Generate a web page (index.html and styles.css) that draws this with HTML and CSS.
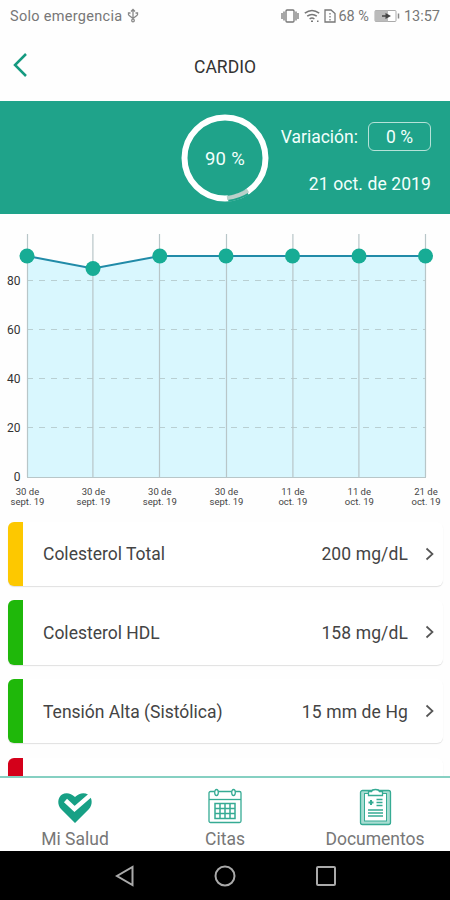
FILE: index.html
```html
<!DOCTYPE html>
<html lang="es">
<head>
    <meta charset="UTF-8">
    <title>Cardio</title>
    <link rel="stylesheet" href="styles.css">
</head>
<body>

<div class="status">
    <span class="carrier">Solo emergencia</span>
    <svg class="usb" width="12" height="16" viewBox="0 0 12 16" fill="none" stroke="#888" stroke-width="1.3">
        <path d="M6 2v9M4 3.500l2-2 2 2M1.500 7V5h2M10.500 7V5h-2M1.500 7L6 10.500 10.500 7"/>
        <circle cx="6" cy="12.500" r="1.300"/>
    </svg>
    <svg class="vibrate" width="18" height="16" viewBox="0 0 18 16" fill="none" stroke="#777" stroke-width="1.300">
        <rect x="5" y="2" width="8" height="12" rx="1"/>
        <path d="M3 3.500v9M1 5v6M15 3.500v9M17 5v6"/>
    </svg>
    <svg class="wifi" width="16" height="16" viewBox="0 0 16 16" fill="none" stroke="#777" stroke-width="1.500">
        <path d="M.8 5.200q7.200-5.400 14.400 0M3.200 8.200q4.800-3.600 9.600 0M5.600 11q2.400-1.800 4.800 0"/>
        <path d="M7 13.300h2M13 13.300h1.500"/>
    </svg>
    <svg class="sim" width="12" height="16" viewBox="0 0 12 16" fill="none" stroke="#777" stroke-width="1.300">
        <path d="M1 2h6l4 3.500V14H1zM6 5v1.500M6 8v1.500M6 11v1.500"/>
    </svg>
    <span class="percent">68 %</span>
    <svg class="battery" width="26" height="14" viewBox="0 0 26 14">
        <rect x="1" y="1.500" width="21" height="11" rx="1" fill="#fff" stroke="#aaa"/>
        <path d="M1 1.500h13v11H1z" fill="#bbb"/>
        <path d="M8 6.200h3.500V4L17 7l-5.500 3V7.800H8z" fill="#444"/>
        <path d="M24.500 4.500v5" stroke="#888" stroke-width="1.500"/>
    </svg>
    <span class="clock">13:57</span>
</div>

<div class="header">
    <svg class="back" width="16" height="26" viewBox="0 0 16 26" fill="none" stroke="#159a80" stroke-width="2.500">
        <path d="M14 2L3 13l11 11"/>
    </svg>
    <h1>CARDIO</h1>
</div>

<div class="banner">
    <div class="ring">
        <svg width="88" height="88" viewBox="0 0 88 88" fill="none">
            <circle cx="44" cy="44" r="40.500" stroke="#fff" stroke-width="6"/>
            <path d="M47 84.400Q58 83 66 78" stroke="#1fa38a" stroke-width="6.500"/>
            <path d="M46 84Q58 82.500 67 76.500" stroke="#b9d0ca" stroke-width="4"/>
        </svg>
        <span>90 %</span>
    </div>
    <div class="summary">
        <div class="variation">Variación: <span class="pill">0 %</span></div>
        <div class="date">21 oct. de 2019</div>
    </div>
</div>

<svg class="chart" width="450" height="307" viewBox="0 214 450 307">
    <path class="area" d="M27 256L93 268.500L160 256H425.500V477H27z"/>
    <path class="guides" d="M27 280.500H425M27 329.500H425M27 378.500H425M27 427.500H425"/>
    <path class="verticals" d="M27.500 234V477M92.900 234V477M159.500 234V477M226.500 234V477M292.900 234V477M358.900 234V477M425.500 234V477M27 477.500H426"/>
    <path class="line" d="M27 256L93 268.500L160 256H425.500"/>
    <g class="dots">
        <circle cx="27" cy="256" r="7.500"/>
        <circle cx="93" cy="268.500" r="7.500"/>
        <circle cx="159.800" cy="256" r="7.500"/>
        <circle cx="226" cy="256" r="7.500"/>
        <circle cx="292.500" cy="256" r="7.500"/>
        <circle cx="359" cy="256" r="7.500"/>
        <circle cx="425.500" cy="256" r="7.500"/>
    </g>
    <g class="y-labels">
        <text x="20.500" y="284.500">80</text>
        <text x="20.500" y="333.500">60</text>
        <text x="20.500" y="382.500">40</text>
        <text x="20.500" y="431.500">20</text>
        <text x="20.500" y="480.500">0</text>
    </g>
    <g class="x-labels">
        <text x="27.500" y="495">30 de</text><text x="27.500" y="504.500">sept. 19</text>
        <text x="93.500" y="495">30 de</text><text x="93.500" y="504.500">sept. 19</text>
        <text x="159.800" y="495">30 de</text><text x="159.800" y="504.500">sept. 19</text>
        <text x="226.500" y="495">30 de</text><text x="226.500" y="504.500">sept. 19</text>
        <text x="292.900" y="495">11 de</text><text x="292.900" y="504.500">oct. 19</text>
        <text x="359.300" y="495">11 de</text><text x="359.300" y="504.500">oct. 19</text>
        <text x="426" y="495">21 de</text><text x="426" y="504.500">oct. 19</text>
    </g>
</svg>

<div class="list">
    <div class="card yellow">
        <span class="name">Colesterol Total</span>
        <span class="value">200 mg/dL</span>
        <svg class="chevron" width="9" height="14" viewBox="0 0 9 14"><path d="M1.500 1.500L7.500 7l-6 5.500"/></svg>
    </div>
    <div class="card green">
        <span class="name">Colesterol HDL</span>
        <span class="value">158 mg/dL</span>
        <svg class="chevron" width="9" height="14" viewBox="0 0 9 14"><path d="M1.500 1.500L7.500 7l-6 5.500"/></svg>
    </div>
    <div class="card green">
        <span class="name">Tensión Alta (Sistólica)</span>
        <span class="value">15 mm de Hg</span>
        <svg class="chevron" width="9" height="14" viewBox="0 0 9 14"><path d="M1.500 1.500L7.500 7l-6 5.500"/></svg>
    </div>
    <div class="card red"></div>
</div>

<div class="tabs">
    <div class="tab">
        <svg width="38" height="38" viewBox="0 0 38 38">
            <path d="M19 35L5 21C1 16.500 1.500 9.500 6 6.500c4-2.500 9-1.500 13 2.500 4-4 9-5 13-2.500 4.500 3 5 10 1 14.500z" fill="#17a085"/>
            <path d="M9.500 12.500l9 8.500L37 5" fill="none" stroke="#fff" stroke-width="4.500"/>
        </svg>
        <span>Mi Salud</span>
    </div>
    <div class="tab">
        <svg width="38" height="38" viewBox="0 0 38 38" fill="none" stroke="#36ab94" stroke-width="1.300">
            <rect x="3" y="3.500" width="32" height="31" rx="1.500"/>
            <path d="M3 11.500h32"/>
            <ellipse cx="10.500" cy="4.500" rx="1.800" ry="3" fill="#fff"/>
            <ellipse cx="27.500" cy="4.500" rx="1.800" ry="3" fill="#fff"/>
            <path d="M9 15.500h20v15H9zM9 20.500h20M9 25.500h20M14 15.500v15M19 15.500v15M24 15.500v15" stroke-width="1.500"/>
        </svg>
        <span>Citas</span>
    </div>
    <div class="tab">
        <svg width="38" height="38" viewBox="0 0 38 38" fill="none" stroke="#36ab94" stroke-width="1.300">
            <rect x="4.500" y="2.500" width="30" height="34" rx="2" fill="#a9ddd2"/>
            <rect x="8.500" y="5.500" width="22" height="27.500" fill="#fff" stroke-width="1"/>
            <path d="M12.500 7.500V3.500h3q.5-2 4-2t4 2h3v4z" fill="#fff"/>
            <path d="M12.500 14.500h5M15 12v5" stroke-width="2"/>
            <path d="M20.500 11.500h6M20.500 14.500h6M20.500 17.500h6M12 22h15M12 25h15M12 28h15"/>
        </svg>
        <span>Documentos</span>
    </div>
</div>

<div class="navbar">
    <svg width="20" height="22" viewBox="0 0 20 22"><path d="M17.500 2v18L2 11z"/></svg>
    <svg width="22" height="22" viewBox="0 0 22 22"><circle cx="11" cy="11" r="9.500"/></svg>
    <svg width="22" height="22" viewBox="0 0 22 22"><rect x="2" y="2" width="18" height="18" rx="1"/></svg>
</div>

</body>
</html>
```
FILE: styles.css
```css
* {
    box-sizing: border-box;
}
body {
    margin: 0;
    width: 450px;
    height: 900px;
    overflow: hidden;
    display: flex;
    flex-direction: column;
    background: #fefefe;
    font-family: Roboto, "Liberation Sans", sans-serif;
    color: #444;
}
svg {
    display: block;
    flex-shrink: 0;
}
.status {
    height: 32px;
    padding: 0 10px;
    display: flex;
    align-items: center;
    font-size: 14.5px;
    color: #777;
    white-space: nowrap;
}
.carrier {
    letter-spacing: 0.3px;
}
.usb {
    margin-left: 4px;
}
.vibrate {
    margin-left: auto;
}
.wifi {
    margin-left: 5px;
}
.sim {
    margin: 0 2px 0 4px;
}
.battery {
    margin: 0 4px 0 5px;
}
.header {
    height: 69px;
    display: grid;
    grid-template-columns: 40px 1fr 40px;
    align-items: center;
}
.back {
    margin-left: 12px;
    margin-bottom: 3px;
}
h1 {
    margin: 0;
    text-align: center;
    font-size: 17.5px;
    font-weight: 400;
    color: #333;
}
.banner {
    height: 113px;
    display: grid;
    grid-template-columns: 1fr 88px 1fr;
    align-items: center;
    background: #1fa38a;
    color: #f2fffc;
    font-size: 17.5px;
}
.ring {
    grid-column: 2;
    display: grid;
    place-items: center;
    font-size: 18.5px;
    letter-spacing: 0.3px;
}
.ring svg, .ring span {
    grid-area: 1 / 1;
}
.ring span {
    padding-top: 2px;
}
.summary {
    display: flex;
    flex-direction: column;
    align-items: flex-end;
    gap: 22px;
    padding: 2px 19px 0 0;
}
.variation {
    display: flex;
    align-items: center;
    gap: 10px;
}
.pill {
    width: 63px;
    height: 29px;
    line-height: 28px;
    border: 1.5px solid #b5e2d8;
    border-radius: 6px;
    text-align: center;
}
.date {
    line-height: 22px;
    letter-spacing: 0.1px;
}
.chart {
    font-family: Roboto, "Liberation Sans", sans-serif;
}
.area {
    fill: #d9f7fe;
}
.guides {
    stroke: #b9cfd2;
    stroke-dasharray: 6 6;
}
.verticals {
    stroke: #b8c6c8;
    stroke-width: 1.2;
    fill: none;
}
.line {
    fill: none;
    stroke: #218ba8;
    stroke-width: 2;
}
.dots {
    fill: #17ac95;
}
.y-labels {
    font-size: 12px;
    fill: #333;
    text-anchor: end;
}
.x-labels {
    font-size: 9.5px;
    fill: #444;
    text-anchor: middle;
}
.list {
    flex: 1;
    min-height: 0;
    overflow: hidden;
    padding: 0.5px 7px 0 8px;
}
.card {
    height: 64.5px;
    margin-bottom: 14.2px;
    padding-right: 9px;
    display: flex;
    align-items: center;
    border-left: 15px solid;
    border-radius: 6px;
    background: #fff;
    box-shadow: 0 1px 1px #e0e0e0;
    font-size: 17.5px;
}
.yellow {
    border-left-color: #fdc800;
}
.green {
    border-left-color: #1fb80a;
}
.red {
    border-left-color: #d4001a;
}
.name {
    flex: 1;
    padding: 1px 0 0 20px;
}
.value {
    padding-top: 1px;
    letter-spacing: 0.12px;
}
.chevron {
    margin-left: 17px;
    fill: none;
    stroke: #555;
    stroke-width: 1.7;
}
.tabs {
    height: 75px;
    display: grid;
    grid-template-columns: repeat(3, 1fr);
    border-top: 2px solid #86d0c2;
    background: #fff;
}
.tab {
    display: flex;
    flex-direction: column;
    align-items: center;
    gap: 1px;
    padding-top: 10px;
    font-size: 17.5px;
    line-height: 25px;
    color: #777;
}
.navbar {
    height: 49px;
    padding-left: 1px;
    display: flex;
    justify-content: center;
    align-items: center;
    gap: 79px;
    background: #000;
}
.navbar svg {
    fill: none;
    stroke: #aaa;
    stroke-width: 2;
}
```
